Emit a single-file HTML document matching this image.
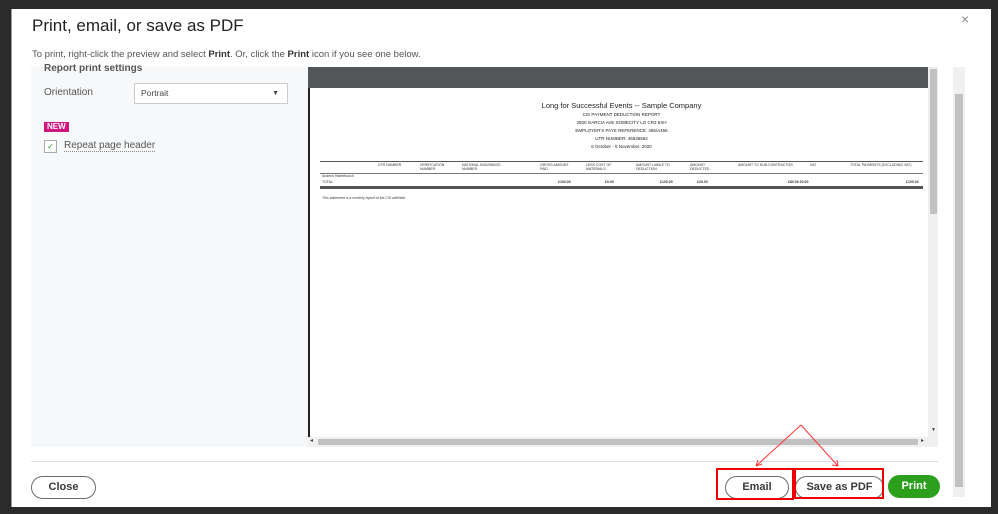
<!DOCTYPE html>
<html><head><style>
*{margin:0;padding:0;box-sizing:border-box}
body{width:998px;height:514px;background:#2b2b2b;position:relative;overflow:hidden;font-family:"Liberation Sans",sans-serif;color:#393a3d}
.a{position:absolute}
.dlg{left:11px;top:9px;width:980px;height:498px;background:#fff;border-left:1px solid #999}
.btn{position:absolute;border:1.5px solid #6b6c72;border-radius:14px;background:#fff;font-weight:bold;font-size:11px;text-align:center;line-height:20px;color:#393a3d}
.d{font-size:3.5px;color:#333;position:absolute;white-space:nowrap}
</style></head><body>
<div class="a dlg"></div>
<div class="a" style="left:32px;top:16px;font-size:17px;color:#222">Print, email, or save as PDF</div>
<div class="a" style="left:961px;top:11px;font-size:14px;color:#888">×</div>
<div class="a" style="left:32px;top:49px;font-size:9.5px;color:#555">To print, right-click the preview and select <b style="color:#333">Print</b>. Or, click the <b style="color:#333">Print</b> icon if you see one below.</div>
<div class="a" style="left:31px;top:67px;width:277px;height:380px;background:#f7f8fa"></div>
<div class="a" style="left:44px;top:64px;font-size:10px;font-weight:bold;color:#555;height:9px;overflow:hidden;line-height:9px">Report print settings</div>
<div class="a" style="left:44px;top:87px;font-size:10px;color:#555">Orientation</div>
<div class="a" style="left:134px;top:83px;width:154px;height:21px;background:#fff;border:1px solid #ccc;font-size:8.5px;line-height:19px;padding-left:6px;color:#444">Portrait<span style="position:absolute;right:8px;font-size:7px">▼</span></div>
<div class="a" style="left:44px;top:122px;background:#d0157f;color:#fff;font-size:8px;font-weight:bold;padding:0 3px;line-height:10px">NEW</div>
<div class="a" style="left:44px;top:140px;width:13px;height:13px;border:1px solid #aaa;background:#fff;font-size:8px;color:#2ca01c;text-align:center;line-height:11px">✓</div>
<div class="a" style="left:64px;top:140px;font-size:10px;color:#555;border-bottom:1px dotted #888">Repeat page header</div>
<div class="a" style="left:308px;top:67px;width:620px;height:21px;background:#54575a"></div>
<div class="a" style="left:308px;top:88px;width:620px;height:349px;background:#fff;border-left:2px solid #222"></div>
<div class="a" style="left:928px;top:67px;width:10px;height:370px;background:#f0f0f0"></div>
<div class="a" style="left:930px;top:69px;width:7px;height:145px;background:#c1c1c1"></div>
<div class="a" style="left:931px;top:427px;font-size:5px;color:#444">▼</div>
<div class="a" style="left:308px;top:437px;width:630px;height:10px;background:#f0f0f0"></div>
<div class="a" style="left:318px;top:439px;width:600px;height:6px;background:#c1c1c1"></div>
<div class="a" style="left:310px;top:437px;font-size:6px;color:#444">◂</div>
<div class="a" style="left:921px;top:437px;font-size:6px;color:#444">▸</div>
<div class="a" style="left:953px;top:67px;width:12px;height:430px;background:#f0f0f0"></div>
<div class="a" style="left:955px;top:94px;width:8px;height:393px;background:#c1c1c1"></div>
<!-- report -->
<div class="a" style="left:320px;top:101px;width:603px;text-align:center;color:#222">
<div style="font-size:7.5px;line-height:10px">Long for Successful Events -- Sample Company</div>
<div style="font-size:4.5px;line-height:8px">CIS PAYMENT DEDUCTION REPORT<br>2500 GARCIA AVE SOMECITY LO CR2 6XH<br>EMPLOYER'S PAYE REFERENCE: 456/A456<br>UTR NUMBER: 45536562<br>6 October - 5 November, 2020</div></div>
<div class="a" style="left:320px;top:161px;width:603px;border-top:1.5px solid #555"></div>
<div class="d" style="left:378px;top:163px">UTR NUMBER</div><div class="d" style="left:420px;top:163px">VERIFICATION<br>NUMBER</div><div class="d" style="left:462px;top:163px">NATIONAL INSURANCE<br>NUMBER</div><div class="d" style="left:540px;top:163px">GROSS AMOUNT<br>PAID</div><div class="d" style="left:586px;top:163px">LESS COST OF<br>MATERIALS</div><div class="d" style="left:636px;top:163px">AMOUNT LIABLE TO<br>DEDUCTION</div><div class="d" style="left:690px;top:163px">AMOUNT<br>DEDUCTED</div><div class="d" style="left:738px;top:163px">AMOUNT TO SUB-CONTRACTOR</div><div class="d" style="left:810px;top:163px">VAT</div><div class="d" style="left:850px;top:163px">TOTAL PAYMENTS (EXCLUDING VAT)</div>
<div class="a" style="left:320px;top:173px;width:603px;border-top:1px solid #777"></div>
<div class="d" style="left:322px;top:174px">Andrew Haberbusch</div><div class="d" style="left:322px;top:180px">TOTAL</div>
<div class="d" style="left:558px;top:180px;font-weight:bold">£100.00</div><div class="d" style="left:605px;top:180px;font-weight:bold">£0.00</div><div class="d" style="left:660px;top:180px;font-weight:bold">£100.00</div><div class="d" style="left:697px;top:180px;font-weight:bold">£20.00</div><div class="d" style="left:788px;top:180px;font-weight:bold">£80.00 £0.00</div><div class="d" style="left:906px;top:180px;font-weight:bold">£100.00</div>
<div class="a" style="left:320px;top:186px;width:603px;border-top:2px double #555;height:3px;border-bottom:1px solid #555"></div>
<div class="d" style="left:322px;top:196px;font-style:italic">This statement is a monthly report of the CIS withheld</div>
<div class="a" style="left:31px;top:461px;width:907px;border-top:1px solid #ddd"></div>
<div class="btn" style="left:31px;top:476px;width:65px;height:23px">Close</div>
<div class="btn" style="left:725px;top:476px;width:64px;height:23px">Email</div>
<div class="btn" style="left:795px;top:476px;width:89px;height:23px">Save as PDF</div>
<div class="btn" style="left:888px;top:475px;width:52px;height:23px;background:#2ca01c;border-color:#2ca01c;color:#fff">Print</div>
<div class="a" style="left:716px;top:468px;width:78px;height:32px;border:2px solid #e00"></div>
<div class="a" style="left:794px;top:468px;width:90px;height:31px;border:2px solid #e00"></div>
<svg class="a" style="left:0;top:0" width="998" height="514"><g stroke="#f33" stroke-width="1" fill="none"><path d="M801 425L756 466M801 425L838 466M756 466l2-6M756 466l6-2M838 466l-1-6M838 466l-6-1"/></g></svg>
</body></html>
